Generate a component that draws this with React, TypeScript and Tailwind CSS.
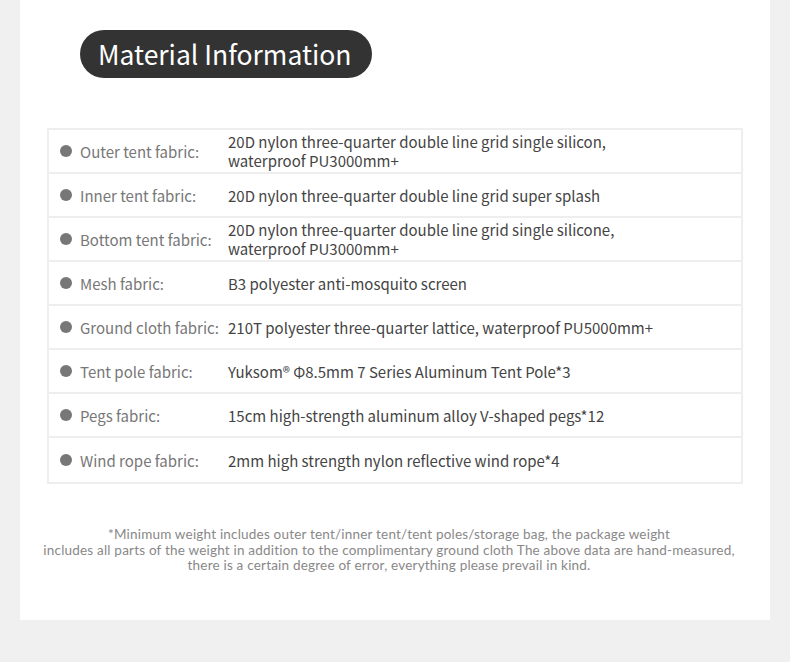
const rows: { label: string; value: string[] }[] = [
  { label: "Outer tent fabric:", value: ["20D nylon three-quarter double line grid single silicon,", "waterproof PU3000mm+"] },
  { label: "Inner tent fabric:", value: ["20D nylon three-quarter double line grid super splash"] },
  { label: "Bottom tent fabric:", value: ["20D nylon three-quarter double line grid single silicone,", "waterproof PU3000mm+"] },
  { label: "Mesh fabric:", value: ["B3 polyester anti-mosquito screen"] },
  { label: "Ground cloth fabric:", value: ["210T polyester three-quarter lattice, waterproof PU5000mm+"] },
  { label: "Tent pole fabric:", value: ["Yuksom® Φ8.5mm 7 Series Aluminum Tent Pole*3"] },
  { label: "Pegs fabric:", value: ["15cm high-strength aluminum alloy V-shaped pegs*12"] },
  { label: "Wind rope fabric:", value: ["2mm high strength nylon reflective wind rope*4"] },
];

export default function App() {
  return (
    <div
      className="w-[790px] h-[662px] bg-[#f0f0f0] overflow-hidden"
      style={{ fontFamily: '"Noto Sans CJK SC", "Noto Sans", sans-serif' }}
    >
      <div className="ml-[20px] w-[750px] h-[620px] bg-white pt-[30px]">
        {/* Title */}
        <div className="ml-[60px] inline-flex items-center h-[48px] pl-[18px] pr-[21px] rounded-full bg-[#333333]">
          <span className="text-white text-[26.5px] leading-none">Material Information</span>
        </div>

        {/* Table */}
        <div className="ml-[27px] mt-[50px] w-[696px] border-2 border-[#eeeeee]">
          {rows.map((row, i) => (
            <div
              key={i}
              className={`flex items-center h-[44px] ${i < rows.length - 1 ? "border-b-2 border-[#eeeeee]" : ""}`}
            >
              <div className="flex items-center w-[179px] shrink-0 pl-[11px]">
                <span className="w-[12px] h-[12px] rounded-full bg-[#777777] mr-[8px]" />
                <span className="text-[15px] text-[#777777] whitespace-nowrap mt-[3px]">{row.label}</span>
              </div>
              <div className="text-[15px] leading-[19px] text-[#444444]">
                {row.value.map((line, j) => (
                  <div key={j} className="whitespace-nowrap">{line}</div>
                ))}
              </div>
            </div>
          ))}
        </div>

        {/* Footnote */}
        <div className="mt-[43px] pr-[12px] text-center text-[13.5px] leading-[15.5px] tracking-[0.2px] text-[#888888] font-['Lato',sans-serif]">
          <div>*Minimum weight includes outer tent/inner tent/tent poles/storage bag, the package weight</div>
          <div>includes all parts of the weight in addition to the complimentary ground cloth The above data are hand-measured,</div>
          <div>there is a certain degree of error, everything please prevail in kind.</div>
        </div>
      </div>
    </div>
  );
}
